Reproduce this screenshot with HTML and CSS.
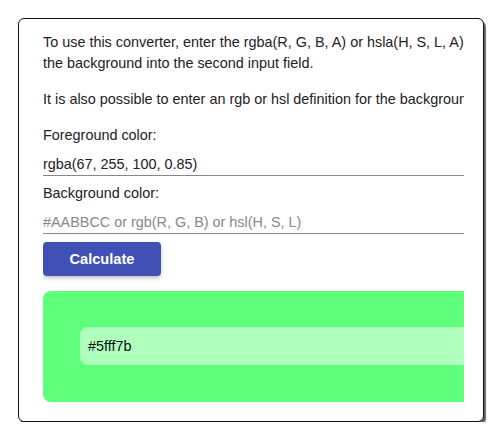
FILE: index.html
```html
<!DOCTYPE html>
<html lang="en">
<head>
  <meta charset="UTF-8">
  <title>Color Converter</title>
  <link rel="stylesheet" href="styles.css">
</head>
<body>
  <div class="card">
    <div class="card-inner">
      <p class="intro">To use this converter, enter the rgba(R, G, B, A) or hsla(H, S, L, A) color into the first input field and the color of<br>the background into the second input field.</p>
      <p class="intro">It is also possible to enter an rgb or hsl definition for the background color.</p>
      <label class="field-label" for="fgInput">Foreground color:</label>
      <input class="field" id="fgInput" type="text" value="rgba(67, 255, 100, 0.85)">
      <label class="field-label" for="bgInput">Background color:</label>
      <input class="field" id="bgInput" type="text" placeholder="#AABBCC or rgb(R, G, B) or hsl(H, S, L)">
      <button class="calc-btn" type="button">Calculate</button>
      <div class="result" id="result">
        <div class="result-value">#5fff7b</div>
      </div>
    </div>
  </div>
</body>
</html>
```

FILE: styles.css
```css
body {
  margin: 0;
  padding: 18px 0 0 18px;
  background-color: #ffffff;
  font-family: 'Liberation Sans', Arial, sans-serif;
  font-size: 14.4px;
  color: #222;
}
.card {
  width: 466px;
  height: 404px;
  box-sizing: border-box;
  border: 1px solid #111;
  border-radius: 6px;
  padding: 13px 0 0 24px;
  box-shadow: 2px 3px 1px #666;
  background: #fff;
}
.card-inner {
  width: 421px;
  overflow: hidden;
  white-space: nowrap;
}
.intro {
  margin: 0 0 15px 0;
  line-height: 21px;
}
.field-label {
  display: block;
  line-height: 21px;
  margin-bottom: 9px;
}
.field {
  display: block;
  width: 100%;
  box-sizing: border-box;
  border: none;
  border-bottom: 1px solid #888;
  padding: 0 0 2px 0;
  margin-bottom: 7px;
  font-family: 'Liberation Sans', Arial, sans-serif;
  font-size: 14.4px;
  line-height: 18px;
  color: #222;
  outline: none;
}
.field::placeholder {
  color: #888;
}
.calc-btn {
  display: block;
  width: 118px;
  height: 34px;
  margin-top: 8px;
  border: none;
  border-radius: 4px;
  background-color: #3f51b5;
  color: #fff;
  font-family: 'Liberation Sans', Arial, sans-serif;
  font-size: 14.6px;
  font-weight: bold;
  box-shadow: 0 2px 4px rgba(0, 0, 0, 0.25);
}
.result {
  margin-top: 15px;
  height: 111px;
  width: 460px;
  box-sizing: border-box;
  padding: 36px 0 0 37px;
  border-radius: 8px;
  background-color: #5fff7b;
}
.result-value {
  height: 38px;
  line-height: 38px;
  padding-left: 8px;
  border-radius: 8px;
  background-color: #afffbd;
  color: #111;
}
```
